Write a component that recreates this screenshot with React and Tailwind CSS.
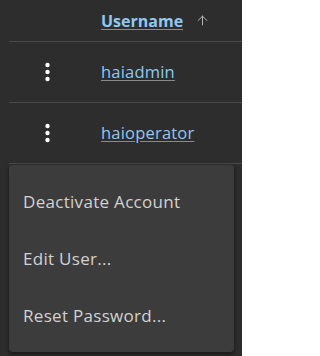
import React from 'react';
import { ArrowUp } from 'lucide-react';

const users = ['haiadmin', 'haioperator'];

const KebabIcon = () => (
    <svg width="7" height="20" viewBox="0 0 7 20" className="text-white">
        <circle cx="3.5" cy="3" r="2.2" fill="currentColor" />
        <circle cx="3.5" cy="10" r="2.2" fill="currentColor" />
        <circle cx="3.5" cy="17" r="2.2" fill="currentColor" />
    </svg>
);

const App = () => {
    const menuItems = ['Deactivate Account', 'Edit User...', 'Reset Password...'];

    return (
        <div className="relative w-[242px] h-[356px] overflow-hidden bg-[#2d2d2d] font-['Open_Sans',sans-serif]">
            {/* Table */}
            <div className="pl-[9px]">
                <div className="flex items-center h-[42px] border-b border-[#4a4a4a]">
                    <div className="w-[92px]" />
                    <span className="text-[16px] font-bold text-[#8fc8f2] underline underline-offset-2 decoration-[#8a8a8a]">
                        Username
                    </span>
                    <ArrowUp size={15} strokeWidth={1.5} className="ml-[12px] text-[#bdbdbd]" />
                </div>
                {users.map((name) => (
                    <div key={name} className="flex items-center h-[61px] border-b border-[#4a4a4a]">
                        <div className="w-[92px] flex pl-[35px]">
                            <KebabIcon />
                        </div>
                        <a className="text-[16.5px] tracking-[0.2px] text-[#8fc8f2] underline underline-offset-2 decoration-[#8a8a8a]">
                            {name}
                        </a>
                    </div>
                ))}
            </div>

            {/* Dropdown menu */}
            <div className="absolute left-[9px] top-[165px] w-[225px] h-[187px] bg-[#3c3c3c] rounded-[4px] shadow-[0_2px_4px_rgba(0,0,0,0.5)] flex flex-col pt-[8px]">
                {menuItems.map((item) => (
                    <button
                        key={item}
                        className="text-left pl-[14px] h-[57px] text-[17px] tracking-[0.3px] text-[#d2d2d2]"
                    >
                        {item}
                    </button>
                ))}
            </div>
        </div>
    );
};

export default App;
